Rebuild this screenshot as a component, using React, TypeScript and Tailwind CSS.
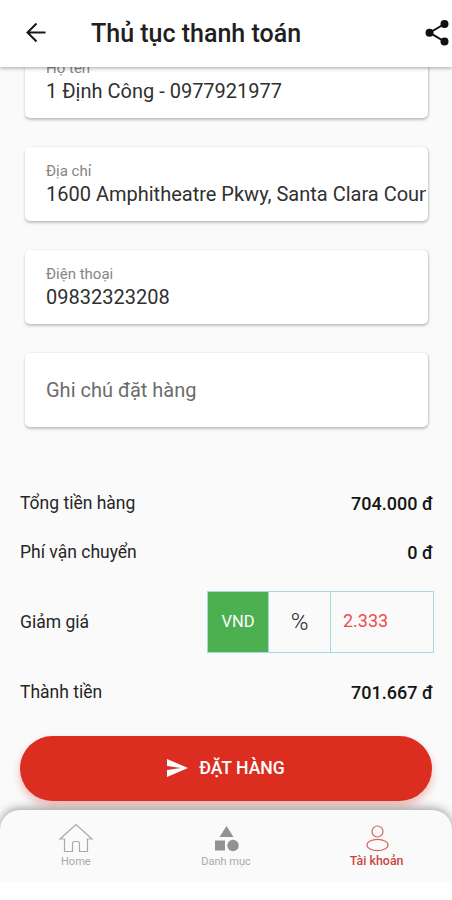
import React from "react";

const cardClass =
  "flex h-[74px] shrink-0 flex-col overflow-hidden rounded-[5px] bg-white pl-[21px] pr-[2px] whitespace-nowrap shadow-[0_2px_3px_rgba(0,0,0,0.22),1px_0_2px_rgba(0,0,0,0.12)]";

function Field({ label, value }: { label: string; value: string }) {
  return (
    <div className={cardClass}>
      <span className="mt-[14px] text-[15px] leading-5 text-[#858585]">{label}</span>
      <span className="overflow-hidden text-[20px] leading-[26px] text-[#303030]">{value}</span>
    </div>
  );
}

function SummaryRow({ label, value }: { label: string; value: string }) {
  return (
    <div className="flex h-[49px] items-center justify-between text-[#262626]">
      <span className="pt-[2px] text-[17.5px]">{label}</span>
      <span className="-mr-[1px] pt-px text-[18px] font-medium text-[#151515]">{value}</span>
    </div>
  );
}

export default function App() {
  return (
    <div className="flex h-[900px] w-[452px] flex-col overflow-hidden bg-white font-['Roboto','Noto_Sans',sans-serif]">
      <header className="relative z-10 flex h-[67px] shrink-0 items-center bg-white shadow-[0_1px_4px_rgba(0,0,0,0.36)]">
        <svg className="ml-[19px] h-[34px] w-[34px] shrink-0" viewBox="0 0 34 34" fill="none" stroke="#181818" strokeWidth="2">
          <path d="M26.5 15.5H8.5M17.5 6.5L8.5 15.5L17.5 24.5" />
        </svg>
        <h1 className="ml-[38px] whitespace-nowrap text-[25px] font-medium leading-8 text-[#202020]">Thủ tục thanh toán</h1>
        <svg className="ml-auto h-[30px] w-[30px] shrink-0" viewBox="0 0 30 30" fill="#111">
          <path d="M22.5 5L7.5 13.7L22.5 22.5" fill="none" stroke="#111" strokeWidth="2" />
          <circle cx="22.5" cy="5" r="4" />
          <circle cx="7.5" cy="13.7" r="4" />
          <circle cx="22.5" cy="22.5" r="4" />
        </svg>
      </header>

      <main className="flex h-[743px] shrink-0 flex-col bg-[#fafafa] px-5">
        <section className="-mt-[23px] ml-[5px] flex w-[403px] flex-col gap-[29px]">
          <Field label="Họ tên" value="1 Định Công - 0977921977" />
          <Field label="Địa chỉ" value="1600 Amphitheatre Pkwy, Santa Clara County" />
          <Field label="Điện thoại" value="09832323208" />
          <div className={cardClass}>
            <span className="my-auto text-[20px] leading-[26px] text-[#6c6c6c]">Ghi chú đặt hàng</span>
          </div>
        </section>

        <section className="mt-[51px] flex flex-col">
          <SummaryRow label="Tổng tiền hàng" value="704.000 đ" />
          <SummaryRow label="Phí vận chuyển" value="0 đ" />
          <div className="mt-[15px] mb-[14px] flex h-[62px] items-center justify-between text-[17.5px] text-[#262626]">
            <span className="pt-px">Giảm giá</span>
            <div className="-mr-[2px] flex h-[62px] w-[227px] border border-[#a2dce1]">
              <span className="flex w-[60px] items-center justify-center bg-[#4caf50] text-[16.5px] text-white">VND</span>
              <span className="flex w-[63px] items-center justify-center border-x border-[#a2dce1] text-[24px] font-light">%</span>
              <span className="flex flex-1 items-center pb-[3px] pl-[12px] text-[18px] text-[#ed4c52]">2.333</span>
            </div>
          </div>
          <SummaryRow label="Thành tiền" value="701.667 đ" />
        </section>

        <button className="mt-[20px] flex h-[65px] shrink-0 items-center justify-center rounded-full bg-[#dc2e20] pb-px text-white shadow-[0_5px_9px_rgba(220,46,32,0.3)]">
          <svg className="mr-[11px] h-[18px] w-[21px]" viewBox="0 0 21 18" fill="currentColor">
            <path d="M0 0L21 9L0 18V11L14 9L0 7Z" />
          </svg>
          <span className="text-[17.6px] font-medium leading-6">ĐẶT HÀNG</span>
        </button>
      </main>

      <div className="h-[72px] shrink-0 bg-[#fafafa]">
        <nav className="relative grid h-[72px] grid-cols-3 rounded-t-[20px] bg-[#fafafa] shadow-[0_-2px_10px_rgba(0,0,0,0.36)] [clip-path:inset(-20px_0_0_0)]">
          <div className="flex flex-col items-center pt-[13px] pl-px text-[11px] leading-[14px] text-[#a9a9a9]">
            <svg className="mb-[2px] h-[30px] w-[36px]" viewBox="0 0 36 30" fill="none" stroke="#aaa" strokeWidth="1.2">
              <path d="M18 1.5L2 16H6.5V28.5H14.5V20.5Q14.5 18.5 16.5 18.5H19.5Q21.5 18.5 21.5 20.5V28.5H29.5V16H34Z" />
            </svg>
            <span>Home</span>
          </div>
          <div className="flex flex-col items-center pt-[15px] text-[11px] leading-[14px] text-[#a9a9a9]">
            <svg className="mb-[2px] h-[28px] w-[26px]" viewBox="0 0 26 28" fill="#929292">
              <path d="M13.5 1L20.5 12H6.5Z" />
              <path d="M2 15.5H12V25.5H2Z" />
              <circle cx="20" cy="20.5" r="5.7" />
            </svg>
            <span>Danh mục</span>
          </div>
          <div className="flex flex-col items-center pt-[14px] text-[12.4px] leading-[14px] text-[#c9473f]">
            <svg className="mb-[2px] h-[28px] w-[24px]" viewBox="0 0 24 28" fill="none" stroke="#ce6961" strokeWidth="1.2">
              <circle cx="12.5" cy="7.5" r="5.5" />
              <ellipse cx="12.5" cy="21" rx="10.5" ry="5.7" />
            </svg>
            <span className="font-medium">Tài khoản</span>
          </div>
        </nav>
      </div>
    </div>
  );
}
